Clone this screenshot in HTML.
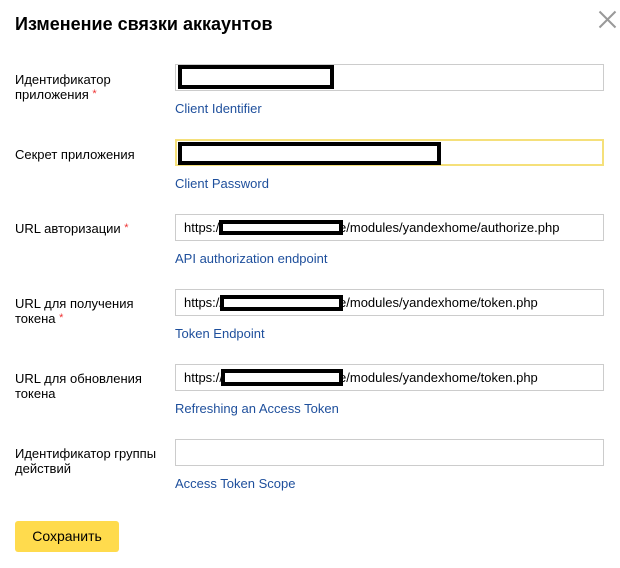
<!DOCTYPE html>
<html><head><meta charset="utf-8"><style>
body{margin:0;width:620px;height:568px;background:#fff;font-family:"Liberation Sans",Arial,sans-serif;position:relative;overflow:hidden;color:#000}
.a{position:absolute}
h1{position:absolute;left:15px;top:13px;margin:0;font-size:18px;font-weight:bold;line-height:22px}
.lab{position:absolute;left:15px;font-size:13px;line-height:15px;color:#000}
.req{color:#e33;font-size:11px;vertical-align:top}
.inp{position:absolute;left:175px;width:429px;height:27px;border:1px solid #ccc;box-sizing:border-box;font-size:13px;line-height:25px;padding-left:8px;color:#000}
.lnk{position:absolute;left:175px;font-size:13px;color:#1e4f9c;line-height:15px}
.red{position:absolute;border:4px solid #000;background:#fff;box-sizing:border-box}
.btn{position:absolute;left:15px;top:521px;width:104px;height:31px;background:#ffdb4d;border-radius:3px;font-size:14px;line-height:31px;text-align:center}
</style></head><body>
<h1>Изменение связки аккаунтов</h1>
<svg class="a" style="left:598px;top:10px" width="19" height="19"><path d="M1.5 1.5L17.5 17.5M17.5 1.5L1.5 17.5" stroke="#999" stroke-width="2"/></svg>

<div class="lab" style="top:72px">Идентификатор<br>приложения <span class="req">*</span></div>
<div class="inp" style="top:64px"></div>
<div class="red" style="left:178px;top:65px;width:156px;height:24px"></div>
<div class="lnk" style="top:101px">Client Identifier</div>

<div class="lab" style="top:147px">Секрет приложения</div>
<div class="inp" style="top:139px;border:2px solid #f5e07a"></div>
<div class="red" style="left:178px;top:142px;width:263px;height:23px"></div>
<div class="lnk" style="top:176px">Client Password</div>

<div class="lab" style="top:221px">URL авторизации <span class="req">*</span></div>
<div class="inp" style="top:214px">https://<span style="display:inline-block;width:116px"></span>e/modules/yandexhome/authorize.php</div>
<div class="red" style="left:219px;top:220px;width:124px;height:15px"></div>
<div class="lnk" style="top:251px">API authorization endpoint</div>

<div class="lab" style="top:296px">URL для получения<br>токена <span class="req">*</span></div>
<div class="inp" style="top:289px">https://<span style="display:inline-block;width:116px"></span>e/modules/yandexhome/token.php</div>
<div class="red" style="left:220px;top:295px;width:123px;height:16px"></div>
<div class="lnk" style="top:326px">Token Endpoint</div>

<div class="lab" style="top:371px">URL для обновления<br>токена</div>
<div class="inp" style="top:364px">https://<span style="display:inline-block;width:116px"></span>e/modules/yandexhome/token.php</div>
<div class="red" style="left:221px;top:369px;width:122px;height:17px"></div>
<div class="lnk" style="top:401px">Refreshing an Access Token</div>

<div class="lab" style="top:446px">Идентификатор группы<br>действий</div>
<div class="inp" style="top:439px"></div>
<div class="lnk" style="top:476px">Access Token Scope</div>

<div class="btn">Сохранить</div>
</body></html>
